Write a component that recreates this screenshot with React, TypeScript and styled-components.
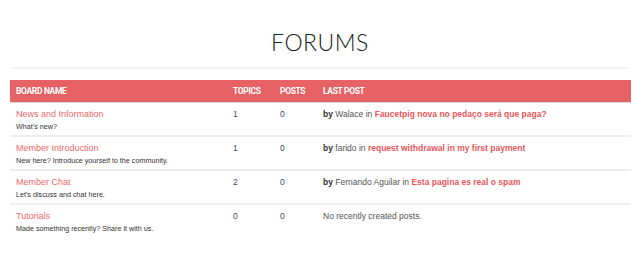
import styled, { createGlobalStyle } from "styled-components";

const GlobalStyle = createGlobalStyle`
  body {
    margin: 0;
    background: #fff;
    font-family: "Liberation Sans", Arial, sans-serif;
    color: #333;
  }
`;

const Page = styled.div`
  padding: 0 9px 0 10px;
`;

const Title = styled.h1`
  margin: 0 1px 0 0;
  padding: 29px 0 12px;
  text-align: center;
  font-family: "Lato", sans-serif;
  font-weight: 300;
  font-size: 23px;
  letter-spacing: 0.5px;
  color: #222;
  line-height: 26px;
  border-bottom: 2px solid #f6f6f6;
`;

const Table = styled.div`
  margin-top: 11px;
  display: grid;
  grid-template-columns: 217px 47px 43px 1fr;
`;

const HeadCell = styled.div`
  background: #e66264;
  color: #fff;
  font-family: "Roboto", sans-serif;
  font-weight: 700;
  font-size: 8.5px;
  letter-spacing: -0.35px;
  height: 22px;
  line-height: 22px;
  padding-left: 6px;
  border-bottom: 1px solid #d8d8d8;
  text-transform: uppercase;
`;

const Cell = styled.div<{ last?: boolean }>`
  padding: 5px 0 3px 6px;
  font-size: 8.5px;
  line-height: 12px;
  border-bottom: ${({ last }) => (last ? "none" : "2px solid #eeeeee")};
`;

const BoardLink = styled.a`
  display: block;
  color: #ec6a6b;
  font-size: 9px;
  line-height: 12px;
  text-decoration: none;
`;

const Desc = styled.div`
  font-size: 7.2px;
  line-height: 11px;
  color: #333;
  margin-top: 1px;
`;

const Count = styled.span`
  color: #3d4c5e;
`;

const LastPost = styled.div`
  color: #555;
`;

const By = styled.b`
  color: #333;
`;

const PostLink = styled.a`
  color: #e8575b;
  font-weight: 700;
  text-decoration: none;
`;

type Board = {
  name: string;
  desc: string;
  topics: number;
  posts: number;
  last?: { user: string; title: string };
};

const boards: Board[] = [
  {
    name: "News and Information",
    desc: "What's new?",
    topics: 1,
    posts: 0,
    last: { user: "Walace", title: "Faucetpig nova no pedaço será que paga?" },
  },
  {
    name: "Member Introduction",
    desc: "New here? Introduce yourself to the community.",
    topics: 1,
    posts: 0,
    last: { user: "farido", title: "request withdrawal in my first payment" },
  },
  {
    name: "Member Chat",
    desc: "Let's discuss and chat here.",
    topics: 2,
    posts: 0,
    last: { user: "Fernando Aguilar", title: "Esta pagina es real o spam" },
  },
  {
    name: "Tutorials",
    desc: "Made something recently? Share it with us.",
    topics: 0,
    posts: 0,
  },
];

export default function App() {
  return (
    <Page>
      <GlobalStyle />
      <Title>FORUMS</Title>
      <Table>
        <HeadCell>Board Name</HeadCell>
        <HeadCell>Topics</HeadCell>
        <HeadCell>Posts</HeadCell>
        <HeadCell>Last Post</HeadCell>
        {boards.map((b, i) => {
          const last = i === boards.length - 1;
          return [
            <Cell key={b.name + "n"} last={last}>
              <BoardLink href="#">{b.name}</BoardLink>
              <Desc>{b.desc}</Desc>
            </Cell>,
            <Cell key={b.name + "t"} last={last}>
              <Count>{b.topics}</Count>
            </Cell>,
            <Cell key={b.name + "p"} last={last}>
              <Count>{b.posts}</Count>
            </Cell>,
            <Cell key={b.name + "l"} last={last}>
              <LastPost>
                {b.last ? (
                  <>
                    <By>by</By> {b.last.user} in{" "}
                    <PostLink href="#">{b.last.title}</PostLink>
                  </>
                ) : (
                  "No recently created posts."
                )}
              </LastPost>
            </Cell>,
          ];
        })}
      </Table>
    </Page>
  );
}
